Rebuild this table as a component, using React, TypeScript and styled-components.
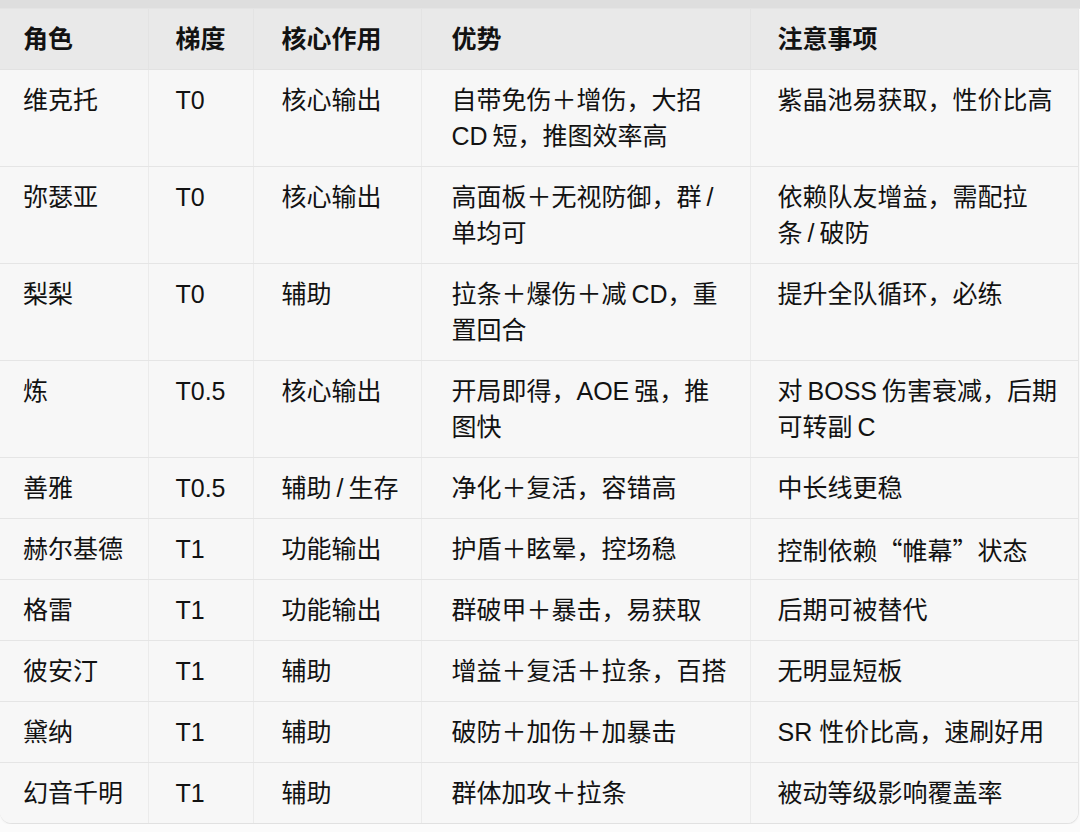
import React from 'react';
import styled, { createGlobalStyle } from 'styled-components';

const GlobalStyle = createGlobalStyle`
  html, body {
    margin: 0;
    padding: 0;
    background: #fbfbfb;
  }
  body {
    font-family: "Liberation Sans", "Noto Sans CJK SC", sans-serif;
    color: #121212;
  }
`;

type Row = {
  name: string;
  tier: string;
  role: string;
  pros: string[];
  notes: string[];
};

// \u2009 stands in for the small gap the original puts between Latin and Chinese
const rows: Row[] = [
  { name: '维克托', tier: 'T0', role: '核心输出', pros: ['自带免伤＋增伤，大招', 'CD\u2009短，推图效率高'], notes: ['紫晶池易获取，性价比高'] },
  { name: '弥瑟亚', tier: 'T0', role: '核心输出', pros: ['高面板＋无视防御，群\u2009/', '单均可'], notes: ['依赖队友增益，需配拉', '条\u2009/\u2009破防'] },
  { name: '梨梨', tier: 'T0', role: '辅助', pros: ['拉条＋爆伤＋减\u2009CD，重', '置回合'], notes: ['提升全队循环，必练'] },
  { name: '炼', tier: 'T0.5', role: '核心输出', pros: ['开局即得，AOE\u2009强，推', '图快'], notes: ['对\u2009BOSS\u2009伤害衰减，后期', '可转副\u2009C'] },
  { name: '善雅', tier: 'T0.5', role: '辅助\u2009/\u2009生存', pros: ['净化＋复活，容错高'], notes: ['中长线更稳'] },
  { name: '赫尔基德', tier: 'T1', role: '功能输出', pros: ['护盾＋眩晕，控场稳'], notes: ['控制依赖“帷幕”状态'] },
  { name: '格雷', tier: 'T1', role: '功能输出', pros: ['群破甲＋暴击，易获取'], notes: ['后期可被替代'] },
  { name: '彼安汀', tier: 'T1', role: '辅助', pros: ['增益＋复活＋拉条，百搭'], notes: ['无明显短板'] },
  { name: '黛纳', tier: 'T1', role: '辅助', pros: ['破防＋加伤＋加暴击'], notes: ['SR 性价比高，速刷好用'] },
  { name: '幻音千明', tier: 'T1', role: '辅助', pros: ['群体加攻＋拉条'], notes: ['被动等级影响覆盖率'] },
];

const headers = ['角色', '梯度', '核心作用', '优势', '注意事项'];
const widths = [148, 105, 168, 329, 328];
const pads = [23, 27, 28, 30, 27];

const TopBand = styled.div`
  height: 9px;
  background: #dedede;
  border-bottom: 1px solid #e4e4e4;
  box-sizing: border-box;
`;

const Card = styled.div`
  width: 1078px;
  background: #f7f7f7;
  border-bottom: 1px solid #e1e1e1;
  border-right: 1px solid #e6e6e6;
  border-radius: 0 0 12px 12px;
  overflow: hidden;
  box-shadow: 0 1px 2px rgba(0, 0, 0, 0.04);
`;

const Table = styled.table`
  width: 100%;
  border-collapse: collapse;
  table-layout: fixed;
  font-size: 25px;
  line-height: 36px;
`;

const HeadRow = styled.tr`
  background: #e9e9e9;
`;

const HeadCell = styled.th<{ $pad: number }>`
  text-align: left;
  font-weight: 700;
  padding: 12px 8px 12px ${({ $pad }) => $pad}px;
  border-bottom: 1px solid #e2e2e2;
  border-left: 1px solid #e3e3e3;
  vertical-align: top;
  &:first-child {
    border-left: none;
  }
`;

const BodyRow = styled.tr`
  background: #f7f7f7;
  &:last-child td {
    border-bottom: none;
  }
`;

const Cell = styled.td<{ $pad: number }>`
  padding: 12px 6px 12px ${({ $pad }) => $pad}px;
  border-bottom: 1px solid #e5e5e5;
  border-left: 1px solid #ebebeb;
  vertical-align: top;
  white-space: nowrap;
  font-weight: 400;
  &:first-child {
    border-left: none;
  }
`;

const Line = styled.div`
  height: 36px;
`;

const CjkMark = styled.span`
  font-family: "Noto Sans CJK SC", sans-serif;
`;

// curly quotes should come from the CJK font, as in the original
const withMarks = (text: string) =>
  text.split(/([“”])/).map((part, i) =>
    part === '“' || part === '”' ? <CjkMark key={i}>{part}</CjkMark> : part
  );

const Lines = ({ lines }: { lines: string[] }) => (
  <>
    {lines.map((l, i) => (
      <Line key={i}>{withMarks(l)}</Line>
    ))}
  </>
);

export default function App() {
  return (
    <>
      <GlobalStyle />
      <TopBand />
      <Card>
        <Table>
          <colgroup>
            {widths.map((w, i) => (
              <col key={i} style={{ width: w }} />
            ))}
          </colgroup>
          <thead>
            <HeadRow>
              {headers.map((h, i) => (
                <HeadCell key={h} $pad={pads[i]}>
                  {h}
                </HeadCell>
              ))}
            </HeadRow>
          </thead>
          <tbody>
            {rows.map((r) => (
              <BodyRow key={r.name}>
                <Cell $pad={pads[0]}>
                  <Line>{r.name}</Line>
                </Cell>
                <Cell $pad={pads[1]}>
                  <Line>{r.tier}</Line>
                </Cell>
                <Cell $pad={pads[2]}>
                  <Line>{r.role}</Line>
                </Cell>
                <Cell $pad={pads[3]}>
                  <Lines lines={r.pros} />
                </Cell>
                <Cell $pad={pads[4]}>
                  <Lines lines={r.notes} />
                </Cell>
              </BodyRow>
            ))}
          </tbody>
        </Table>
      </Card>
    </>
  );
}
